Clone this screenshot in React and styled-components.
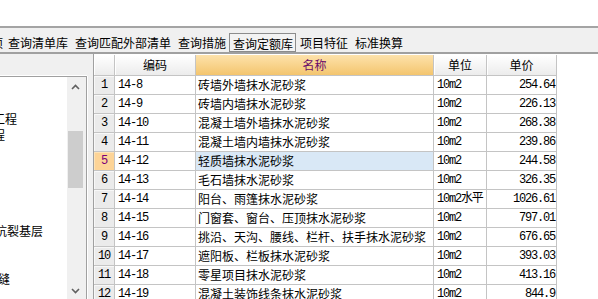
import React from "react";
import styled, { createGlobalStyle } from "styled-components";

const GlobalStyle = createGlobalStyle`
  html, body { margin: 0; padding: 0; background: #fff; }
  body { font-family: "Noto Sans CJK SC", sans-serif; font-size: 12px; color: #000; }
  * { box-sizing: border-box; }
`;

const Page = styled.div`
  width: 598px;
  height: 299px;
  overflow: hidden;
  display: flex;
  flex-direction: column;
  background: #fff;
`;

const TopBlank = styled.div`
  height: 26px;
  flex: none;
  background: #fff;
`;

const Rule = styled.div`
  height: 2px;
  flex: none;
  background: #a4a4a4;
`;

const TabBar = styled.div`
  height: 26px;
  flex: none;
  background: #f0f0f0;
  border-bottom: 2px solid #a0a0a0;
  display: flex;
  align-items: flex-end;
  overflow: hidden;
  white-space: nowrap;
`;

const Tab = styled.div`
  height: 19px;
  border: 1px solid ${(p) => (p.$active ? "#8c8c8c" : "transparent")};
  padding: ${(p) => (p.$active ? "2px 2px 0 3px" : p.$clip ? "0 0 0 3px" : "0 2px 0 3px")};
  line-height: ${(p) => (p.$active ? "15px" : "17px")};
  margin-left: ${(p) => (p.$clip ? "-37px" : "0")};
  font-size: 12px;
  color: #000;
  background: ${(p) => (p.$active ? "#f3f3f3" : "transparent")};
`;

const Body = styled.div`
  flex: 1;
  min-height: 0;
  display: flex;
`;

const LeftPanel = styled.div`
  width: 93px;
  flex: none;
  background: #f0f0f0;
  padding-top: 22px;
  overflow: hidden;
`;

const Frame = styled.div`
  width: 87px;
  height: 225px;
  display: flex;
  border-top: 1px solid #a0a0a0;
  border-right: 1px solid #a0a0a0;
  box-shadow: 0 -1px 0 #ffffff, 1px 0 0 #ffffff;
  padding-right: 2px;
  background: #f0f0f0;
`;

const TreeArea = styled.div`
  flex: 1;
  background: #fff;
  padding-top: 2px;
  overflow: hidden;
`;

const TreeItem = styled.div`
  height: 16px;
  line-height: 16px;
  white-space: nowrap;
  margin-left: ${(p) => p.$start}px;
  font-size: 12px;
  color: #000;
`;

const ScrollBar = styled.div`
  width: 17px;
  flex: none;
  background: #f0f0f0;
  display: flex;
  flex-direction: column;
`;

const ScrollButton = styled.div`
  height: 20px;
  flex: none;
  display: flex;
  align-items: center;
  justify-content: center;
`;

const Track = styled.div`
  flex: 1;
  padding: 0 1px;
`;

const Thumb = styled.div`
  background: #cdcdcd;
  height: ${(p) => p.$size}px;
  margin-top: ${(p) => p.$offset}px;
`;

const GridArea = styled.div`
  flex: 1;
  background: #fff;
  border-left: 1px solid #a0a0a0;
  padding-top: 1px;
  overflow: hidden;
`;

const Table = styled.div`
  display: grid;
  grid-template-columns: 21px 81px 238px 53px 70px;
  grid-template-rows: 21px;
  grid-auto-rows: 19px;
  width: 463px;
`;

const Cell = styled.div`
  border-right: 1px solid #c4c4c4;
  border-bottom: 1px solid #c4c4c4;
  white-space: nowrap;
  overflow: hidden;
  line-height: 18px;
  font-size: 12px;
  color: #000;
  padding: ${(p) => p.$pad || "0"};
  text-align: ${(p) => p.$align || "left"};
  background: ${(p) => (p.$selected ? "#d9e8f6" : "#fff")};
  font-family: ${(p) =>
    p.$mono ? '"Liberation Mono", "Noto Sans CJK SC", monospace' : '"Noto Sans CJK SC", sans-serif'};
  letter-spacing: ${(p) => (p.$mono ? "-1.2px" : "0")};
`;

const HeaderCell = styled.div`
  border-right: 1px solid #c4c4c4;
  border-bottom: 1px solid #c4c4c4;
  line-height: 20px;
  text-align: center;
  font-size: 12px;
  color: ${(p) => (p.$accent ? "#6a0a6a" : "#000")};
  background: ${(p) =>
    p.$accent
      ? "linear-gradient(#fde2ab, #f3c56e)"
      : "linear-gradient(#ffffff, #ececec)"};
  box-shadow: ${(p) => (p.$accent ? "none" : "inset 1px 1px 0 #ffffff")};
`;

const RowNum = styled.div`
  border-right: 1px solid #c4c4c4;
  border-bottom: 1px solid #c4c4c4;
  line-height: 18px;
  text-align: center;
  font-family: "Liberation Mono", monospace;
  letter-spacing: -1.2px;
  font-size: 12px;
  color: ${(p) => (p.$current ? "#7a007a" : "#000")};
  background: ${(p) => (p.$current ? "#fdd497" : "#ebebeb")};
  box-shadow: inset 1px 1px 0 ${(p) => (p.$current ? "#fde3b8" : "#f8f8f8")};
`;

const Chevron = ({ down }) => (
  <svg width="9" height="6" viewBox="0 0 9 6">
    <polyline
      points={down ? "1,1 4.5,4.5 8,1" : "1,5 4.5,1.5 8,5"}
      fill="none"
      stroke="#606060"
      strokeWidth="1.6"
    />
  </svg>
);

const tabs = [
  { label: "清单项", clip: true },
  { label: "查询清单库" },
  { label: "查询匹配外部清单" },
  { label: "查询措施" },
  { label: "查询定额库", active: true },
  { label: "项目特征" },
  { label: "标准换算" },
];

const tree = [
  { text: "", start: 0 },
  { text: "", start: 0 },
  { text: "墙柱面工程", start: -43 },
  { text: "天棚工程", start: -43 },
  { text: "", start: 0 },
  { text: "", start: 0 },
  { text: "", start: 0 },
  { text: "", start: 0 },
  { text: "", start: 0 },
  { text: "墙面抗裂基层", start: -29 },
  { text: "", start: 0 },
  { text: "", start: 0 },
  { text: "变形缝", start: -26 },
  { text: "", start: 0 },
];

const rows = [
  ["14-8", "砖墙外墙抹水泥砂浆", "10m2", "254.64"],
  ["14-9", "砖墙内墙抹水泥砂浆", "10m2", "226.13"],
  ["14-10", "混凝土墙外墙抹水泥砂浆", "10m2", "268.38"],
  ["14-11", "混凝土墙内墙抹水泥砂浆", "10m2", "239.86"],
  ["14-12", "轻质墙抹水泥砂浆", "10m2", "244.58"],
  ["14-13", "毛石墙抹水泥砂浆", "10m2", "326.35"],
  ["14-14", "阳台、雨篷抹水泥砂浆", "10m2水平", "1026.61"],
  ["14-15", "门窗套、窗台、压顶抹水泥砂浆", "10m2", "797.01"],
  ["14-16", "挑沿、天沟、腰线、栏杆、扶手抹水泥砂浆", "10m2", "676.65"],
  ["14-17", "遮阳板、栏板抹水泥砂浆", "10m2", "393.03"],
  ["14-18", "零星项目抹水泥砂浆", "10m2", "413.16"],
  ["14-19", "混凝土装饰线条抹水泥砂浆", "10m2", "844.9"],
];

const CURRENT = 5;

export default function App() {
  return (
    <>
      <GlobalStyle />
      <Page>
        <TopBlank />
        <Rule />
        <TabBar>
          {tabs.map((t) => (
            <Tab key={t.label} $active={t.active} $clip={t.clip}>
              {t.label}
            </Tab>
          ))}
        </TabBar>
        <Body>
          <LeftPanel>
            <Frame>
              <TreeArea>
                {tree.map((item, i) => (
                  <TreeItem key={i} $start={item.start}>
                    {item.text}
                  </TreeItem>
                ))}
              </TreeArea>
              <ScrollBar>
                <ScrollButton>
                  <Chevron />
                </ScrollButton>
                <Track>
                  <Thumb $offset={34} $size={57} />
                </Track>
                <ScrollButton>
                  <Chevron down />
                </ScrollButton>
              </ScrollBar>
            </Frame>
          </LeftPanel>
          <GridArea>
            <Table>
              <HeaderCell />
              <HeaderCell>编码</HeaderCell>
              <HeaderCell $accent>名称</HeaderCell>
              <HeaderCell>单位</HeaderCell>
              <HeaderCell>单价</HeaderCell>
              {rows.map((r, i) => {
                const n = i + 1;
                const cur = n === CURRENT;
                return (
                  <React.Fragment key={r[0]}>
                    <RowNum $current={cur}>{n}</RowNum>
                    <Cell $mono $pad="0 0 0 3px">{r[0]}</Cell>
                    <Cell $pad="0 0 0 2px" $selected={cur}>{r[1]}</Cell>
                    <Cell $mono $pad="0 0 0 3px">{r[2]}</Cell>
                    <Cell $mono $align="right" $pad="0 1px 0 0">{r[3]}</Cell>
                  </React.Fragment>
                );
              })}
            </Table>
          </GridArea>
        </Body>
      </Page>
    </>
  );
}
